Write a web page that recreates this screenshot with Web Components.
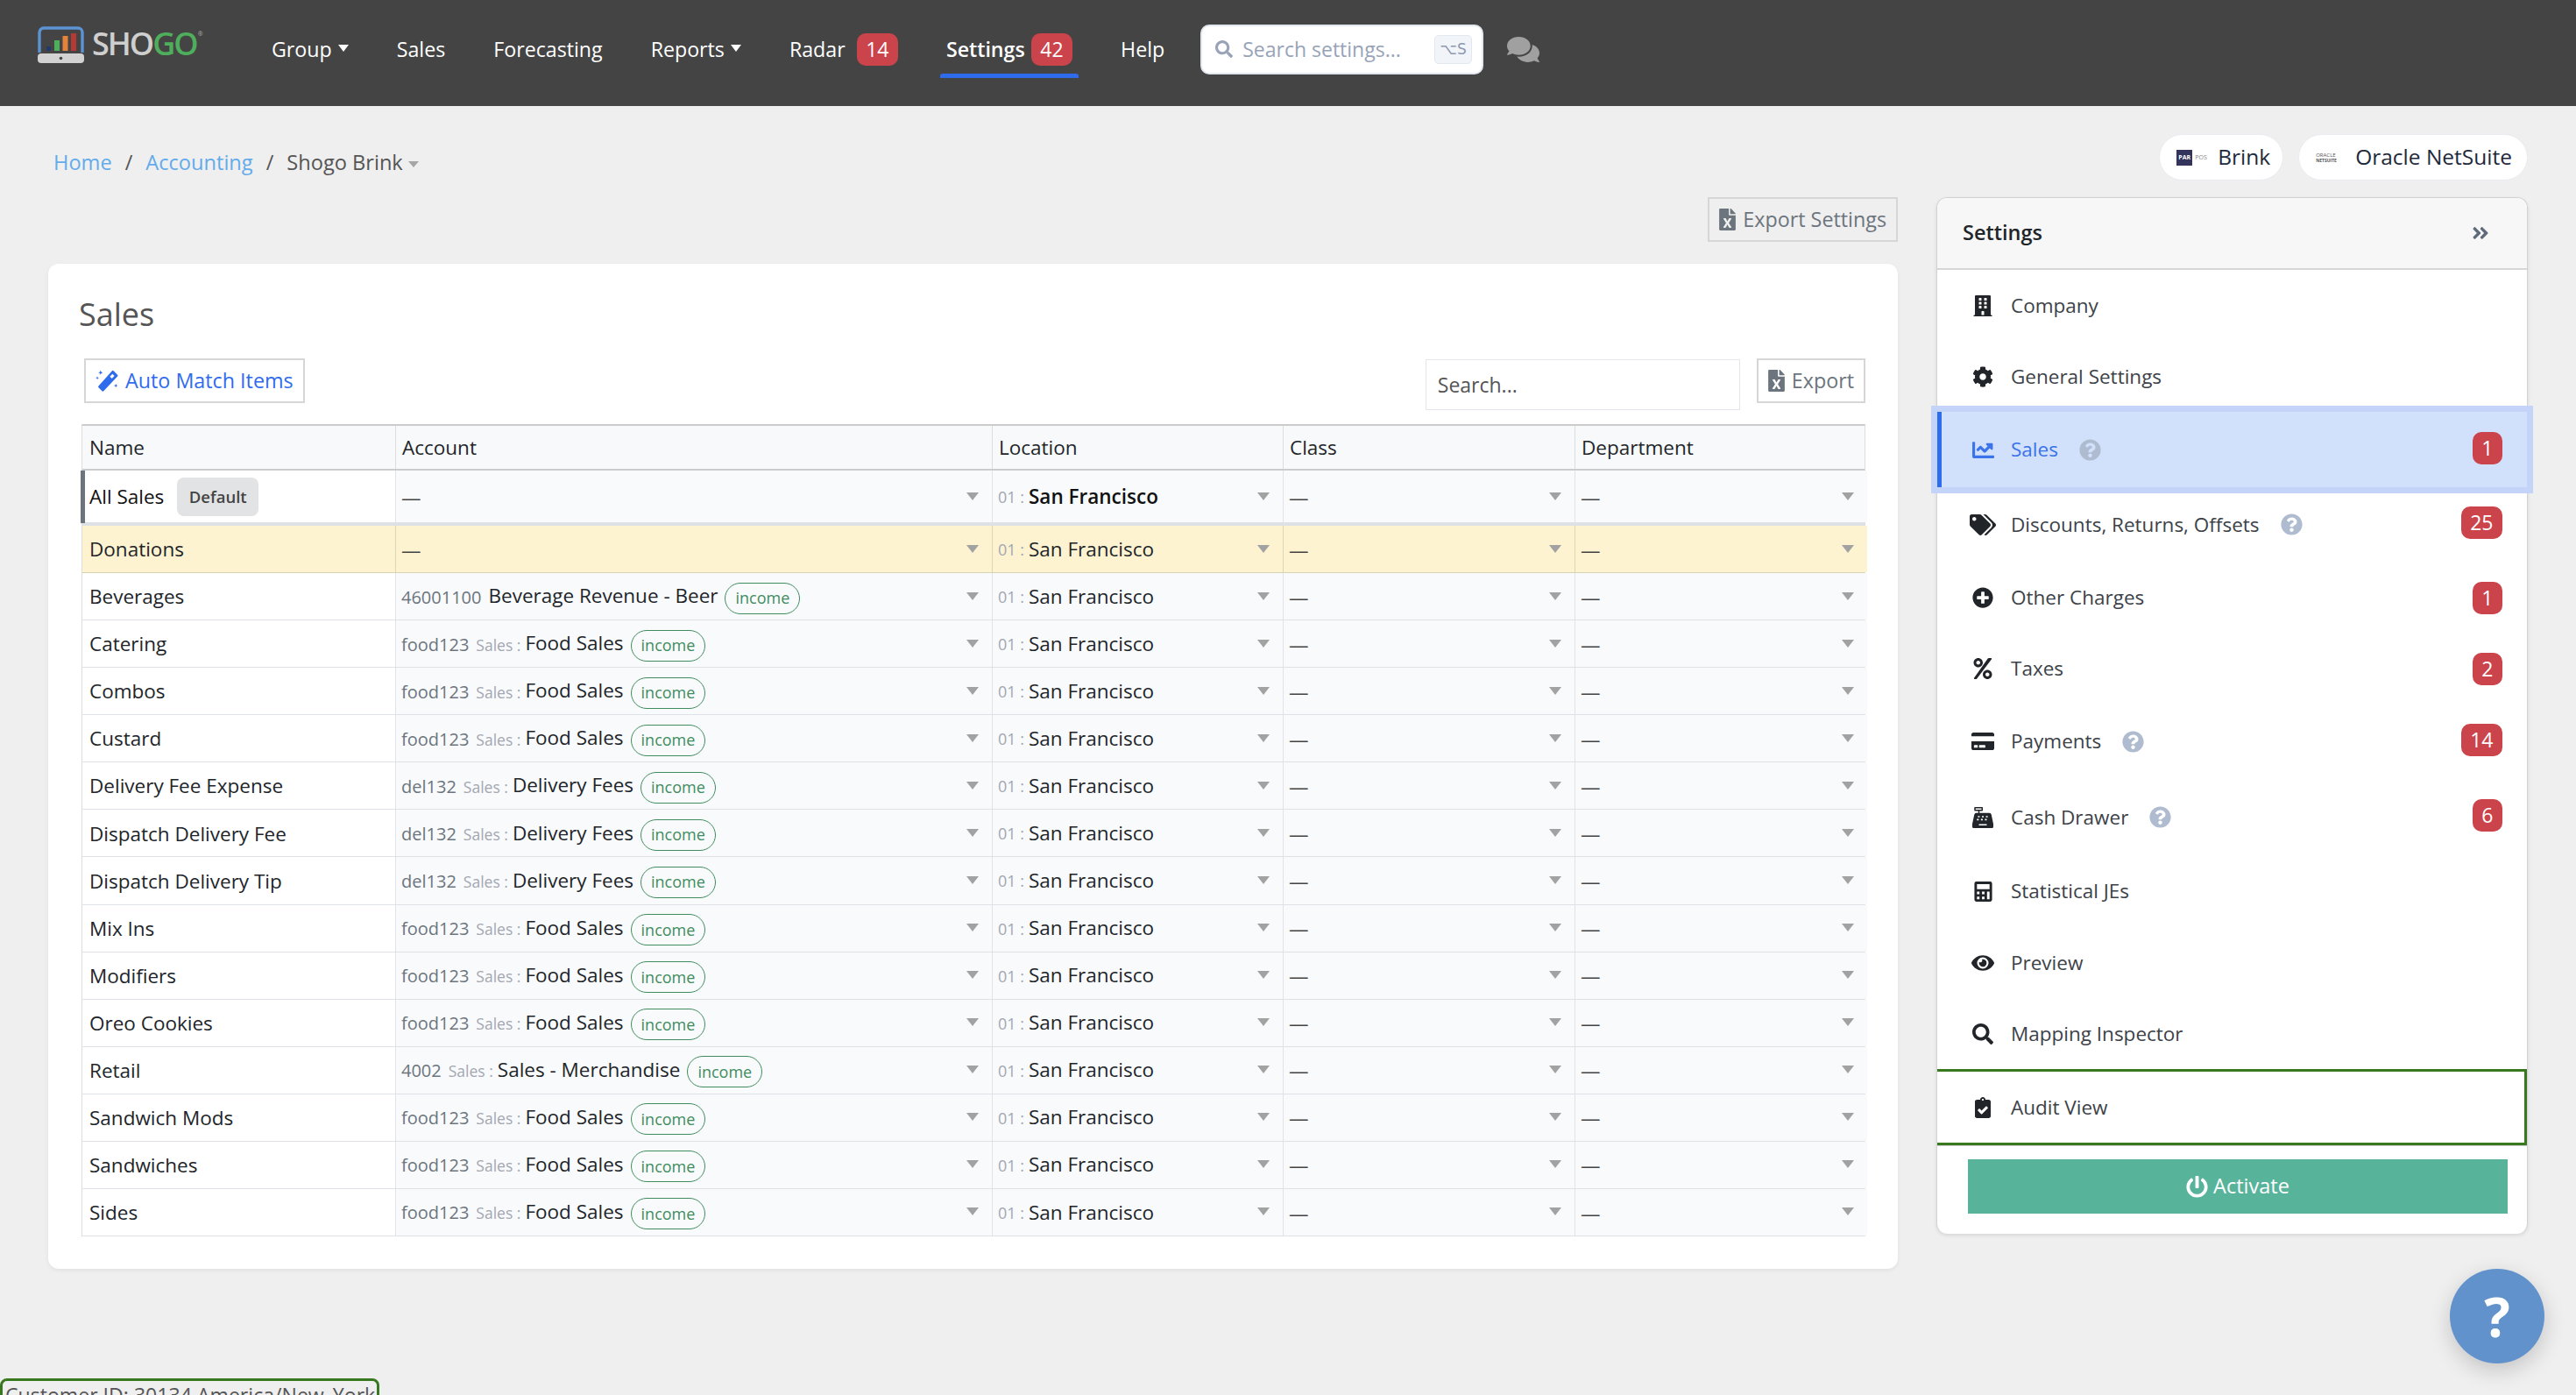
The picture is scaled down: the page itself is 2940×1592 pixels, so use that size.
<!doctype html>
<html lang="en">
<head>
<meta charset="utf-8">
<title>Shogo - Sales settings</title>
<style>
  html, body { margin: 0; height: 1592px; overflow: hidden; }
  body { background: #efefef; font: 24px/1.5 "Open Sans", "Liberation Sans", sans-serif; color: #212529; }
</style>
</head>
<body>
<shogo-header></shogo-header>
<page-body>
  <bread-crumbs slot="crumbs"></bread-crumbs>
  <system-chip slot="chips" kind="brink">Brink</system-chip>
  <system-chip slot="chips" kind="oracle">Oracle NetSuite</system-chip>
  <sales-card slot="main"></sales-card>
  <side-panel slot="side"></side-panel>
</page-body>
<customer-tag>Customer ID: 30134 America/New_York</customer-tag>
<help-fab></help-fab>

<script>
const ICONS = {
  building: ['0 0 448 512', 'M436 480h-20V24c0-13.255-10.745-24-24-24H56C42.745 0 32 10.745 32 24v456H12c-6.627 0-12 5.373-12 12v20h448v-20c0-6.627-5.373-12-12-12zM128 76c0-6.627 5.373-12 12-12h40c6.627 0 12 5.373 12 12v40c0 6.627-5.373 12-12 12h-40c-6.627 0-12-5.373-12-12V76zm0 96c0-6.627 5.373-12 12-12h40c6.627 0 12 5.373 12 12v40c0 6.627-5.373 12-12 12h-40c-6.627 0-12-5.373-12-12v-40zm52 148h-40c-6.627 0-12-5.373-12-12v-40c0-6.627 5.373-12 12-12h40c6.627 0 12 5.373 12 12v40c0 6.627-5.373 12-12 12zm76 160h-64v-84c0-6.627 5.373-12 12-12h40c6.627 0 12 5.373 12 12v84zm64-172c0 6.627-5.373 12-12 12h-40c-6.627 0-12-5.373-12-12v-40c0-6.627 5.373-12 12-12h40c6.627 0 12 5.373 12 12v40zm0-96c0 6.627-5.373 12-12 12h-40c-6.627 0-12-5.373-12-12v-40c0-6.627 5.373-12 12-12h40c6.627 0 12 5.373 12 12v40zm0-96c0 6.627-5.373 12-12 12h-40c-6.627 0-12-5.373-12-12V76c0-6.627 5.373-12 12-12h40c6.627 0 12 5.373 12 12v40z'],
  cog: ['0 0 512 512', 'M487.4 315.7l-42.6-24.6c4.3-23.2 4.3-47 0-70.2l42.6-24.6c4.9-2.8 7.1-8.6 5.5-14-11.1-35.6-30-67.8-54.7-94.6-3.8-4.1-10-5.1-14.8-2.3L380.8 110c-17.9-15.4-38.5-27.3-60.8-35.1V25.8c0-5.6-3.9-10.5-9.4-11.7-36.7-8.2-74.3-7.8-109.2 0-5.5 1.2-9.4 6.1-9.4 11.7V75c-22.2 7.9-42.8 19.8-60.8 35.1L88.7 85.5c-4.9-2.8-11-1.9-14.8 2.3-24.7 26.7-43.6 58.9-54.7 94.6-1.7 5.4.6 11.2 5.5 14L67.3 221c-4.3 23.2-4.3 47 0 70.2l-42.6 24.6c-4.9 2.8-7.1 8.6-5.5 14 11.1 35.6 30 67.8 54.7 94.6 3.8 4.1 10 5.1 14.8 2.3l42.6-24.6c17.9 15.4 38.5 27.3 60.8 35.1v49.2c0 5.6 3.9 10.5 9.4 11.7 36.7 8.2 74.3 7.8 109.2 0 5.5-1.2 9.4-6.1 9.4-11.7v-49.2c22.2-7.9 42.8-19.8 60.8-35.1l42.6 24.6c4.9 2.8 11 1.9 14.8-2.3 24.7-26.7 43.6-58.9 54.7-94.6 1.5-5.5-.7-11.3-5.6-14.1zM256 336c-44.1 0-80-35.9-80-80s35.9-80 80-80 80 35.9 80 80-35.9 80-80 80z'],
  chart: ['0 0 512 512', 'M496 384H64V80c0-8.84-7.16-16-16-16H16C7.16 64 0 71.16 0 80v336c0 17.67 14.33 32 32 32h464c8.84 0 16-7.16 16-16v-32c0-8.84-7.16-16-16-16zM464 96H345.94c-21.38 0-32.09 25.85-16.97 40.97l32.4 32.4L288 242.75l-73.37-73.37c-12.5-12.5-32.76-12.5-45.25 0l-68.69 68.69c-6.25 6.25-6.25 16.38 0 22.63l22.62 22.62c6.25 6.25 16.38 6.25 22.63 0L192 237.25l73.37 73.37c12.5 12.5 32.76 12.5 45.25 0l96-96 32.4 32.4c15.12 15.12 40.97 4.41 40.97-16.97V112c.01-8.84-7.15-16-15.99-16z'],
  tags: ['0 0 640 512', 'M497.941 225.941L286.059 14.059A48 48 0 0 0 252.118 0H48C21.49 0 0 21.49 0 48v204.118a48 48 0 0 0 14.059 33.941l211.882 211.882c18.744 18.745 49.136 18.746 67.882 0l204.118-204.118c18.745-18.745 18.745-49.137 0-67.882zM112 160c-26.51 0-48-21.49-48-48s21.49-48 48-48 48 21.49 48 48-21.49 48-48 48zm513.941 133.823L421.823 497.941c-18.745 18.745-49.137 18.745-67.882 0l-.36-.36L527.64 323.522c16.999-16.999 26.36-39.6 26.36-63.64s-9.362-46.641-26.36-63.64L331.397 0h48.721a48 48 0 0 1 33.941 14.059l211.882 211.882c18.745 18.745 18.745 49.137 0 67.882z'],
  plus: ['0 0 512 512', 'M256 8C119 8 8 119 8 256s111 248 248 248 248-111 248-248S393 8 256 8zm144 276c0 6.6-5.4 12-12 12h-92v92c0 6.6-5.4 12-12 12h-56c-6.6 0-12-5.4-12-12v-92h-92c-6.6 0-12-5.4-12-12v-56c0-6.6 5.4-12 12-12h92v-92c0-6.6 5.4-12 12-12h56c6.6 0 12 5.4 12 12v92h92c6.6 0 12 5.4 12 12v56z'],
  percent: ['0 0 448 512', 'M112 224c61.9 0 112-50.1 112-112S173.9 0 112 0 0 50.1 0 112s50.1 112 112 112zm0-160c26.5 0 48 21.5 48 48s-21.5 48-48 48-48-21.5-48-48 21.5-48 48-48zm224 224c-61.9 0-112 50.1-112 112s50.1 112 112 112 112-50.1 112-112-50.1-112-112-112zm0 160c-26.5 0-48-21.5-48-48s21.5-48 48-48 48 21.5 48 48-21.5 48-48 48zM368 0h56c14 0 22 15 14 27L80 500c-5 8-13 12-22 12H24c-14 0-22-15-14-27L346 12c5-8 13-12 22-12z'],
  card: ['0 0 576 512', 'M0 432c0 26.5 21.5 48 48 48h480c26.5 0 48-21.5 48-48V256H0v176zm192-68c0-6.6 5.4-12 12-12h136c6.6 0 12 5.4 12 12v40c0 6.6-5.4 12-12 12H204c-6.6 0-12-5.4-12-12v-40zm-128 0c0-6.6 5.4-12 12-12h72c6.6 0 12 5.4 12 12v40c0 6.6-5.4 12-12 12H76c-6.6 0-12-5.4-12-12v-40zM576 80v48H0V80c0-26.5 21.5-48 48-48h480c26.5 0 48 21.5 48 48z'],
  register: ['0 0 512 512', 'M64 0h176a16 16 0 0 1 16 16v64a16 16 0 0 1-16 16h-64v48h240a48 48 0 0 1 47 38l49 230v68a32 32 0 0 1-32 32H32a32 32 0 0 1-32-32v-68l49-230a48 48 0 0 1 47-38h48V96H64a16 16 0 0 1-16-16V16A16 16 0 0 1 64 0zM80 32v32h144V32zM136 216v36h44v-36zM234 216v36h44v-36zM332 216v36h44v-36zM112 288v36h44v-36zM210 288v36h44v-36zM308 288v36h44v-36zM160 416v32h192v-32z'],
  calculator: ['0 0 448 512', 'M48 0h352a48 48 0 0 1 48 48v416a48 48 0 0 1-48 48H48a48 48 0 0 1-48-48V48A48 48 0 0 1 48 0zM64 64v128h320V64zM64 256v64h64v-64zM192 256v64h64v-64zM320 256v192h64V256zM64 384v64h64v-64zM192 384v64h64v-64z'],
  eye: ['0 0 576 512', 'M572.52 241.4C518.29 135.59 410.93 64 288 64S57.68 135.64 3.48 241.41a32.35 32.35 0 0 0 0 29.19C57.71 376.41 165.07 448 288 448s230.32-71.64 284.52-177.41a32.35 32.35 0 0 0 0-29.19zM288 400a144 144 0 1 1 144-144 143.93 143.93 0 0 1-144 144zm0-240a95.31 95.31 0 0 0-25.31 3.79 47.85 47.85 0 0 1-66.9 66.9A95.78 95.78 0 1 0 288 160z'],
  search: ['0 0 512 512', 'M505 442.7L405.3 343c-4.5-4.5-10.6-7-17-7H372c27.6-35.3 44-79.7 44-128C416 93.1 322.9 0 208 0S0 93.1 0 208s93.1 208 208 208c48.3 0 92.7-16.4 128-44v16.3c0 6.4 2.5 12.5 7 17l99.7 99.7c9.4 9.4 24.6 9.4 33.9 0l28.3-28.3c9.4-9.4 9.4-24.6.1-34zM208 336c-70.7 0-128-57.2-128-128 0-70.7 57.2-128 128-128 70.7 0 128 57.2 128 128 0 70.7-57.2 128-128 128z'],
  clipboard: ['0 0 384 512', 'M336 64h-80c0-35.3-28.7-64-64-64s-64 28.7-64 64H48C21.5 64 0 85.5 0 112v352c0 26.5 21.5 48 48 48h288c26.5 0 48-21.5 48-48V112c0-26.5-21.5-48-48-48zM192 40c13.3 0 24 10.7 24 24s-10.7 24-24 24-24-10.7-24-24 10.7-24 24-24zm121.2 231.8l-143 141.8c-4.7 4.7-12.3 4.6-17-.1l-82.6-83.3c-4.7-4.7-4.6-12.3.1-17L99.1 285c4.7-4.7 12.3-4.6 17 .1l46 46.4 106-105.2c4.7-4.7 12.3-4.6 17 .1l28.2 28.4c4.7 4.8 4.6 12.3-.1 17z'],
  question: ['0 0 512 512', 'M504 256c0 136.997-111.043 248-248 248S8 392.997 8 256C8 119.083 119.043 8 256 8s248 111.083 248 248zM262.655 90c-54.497 0-89.255 22.957-116.549 63.758-3.536 5.286-2.353 12.415 2.715 16.258l34.699 26.31c5.205 3.947 12.621 3.008 16.665-2.122 17.864-22.658 30.113-35.797 57.303-35.797 20.429 0 45.698 13.148 45.698 32.958 0 14.976-12.363 22.667-32.534 33.976C247.128 238.528 216 254.941 216 296v4c0 6.627 5.373 12 12 12h56c6.627 0 12-5.373 12-12v-1.333c0-28.462 83.186-29.647 83.186-106.667 0-58.002-60.165-102-116.531-102zM256 338c-25.365 0-46 20.635-46 46 0 25.364 20.635 46 46 46s46-20.636 46-46c0-25.365-20.635-46-46-46z'],
  excel: ['0 0 384 512', 'M224 136V0H24C10.7 0 0 10.7 0 24v464c0 13.3 10.7 24 24 24h336c13.3 0 24-10.7 24-24V160H248c-13.2 0-24-10.8-24-24zm60.1 106.5L224 336l60.1 93.5c5.1 8-.6 18.5-10.1 18.5h-34.9c-4.4 0-8.5-2.4-10.6-6.3C208.9 405.5 192 373 192 373c-6.1 14.1-9.5 19-36.6 68.8-2.1 3.9-6.1 6.3-10.5 6.3H110c-9.5 0-15.2-10.5-10.1-18.5l60.3-93.5-60.3-93.5c-5.2-8 .6-18.5 10.1-18.5h34.8c4.4 0 8.5 2.4 10.6 6.3 26.1 48.8 20 33.6 36.6 68.5 0 0 6.1-11.7 36.6-68.5 2.1-3.9 6.2-6.3 10.6-6.3H274c9.5-.1 15.2 10.4 10.1 18.4zM384 121.9v6.1H256V0h6.1c6.4 0 12.5 2.5 17 7l97.9 98c4.5 4.5 7 10.6 7 16.9z'],
  comments: ['0 0 576 512', 'M416 192c0-88.4-93.1-160-208-160S0 103.6 0 192c0 34.3 14.1 65.9 38 92-13.4 30.2-35.5 54.2-35.8 54.5-2.2 2.3-2.8 5.7-1.5 8.7S4.8 352 8 352c36.6 0 66.9-12.3 88.7-25 32.2 15.7 70.3 25 111.3 25 114.9 0 208-71.6 208-160zm122 220c23.9-26 38-57.7 38-92 0-66.9-53.5-124.2-129.3-148.1.9 6.6 1.3 13.3 1.3 20.1 0 105.9-107.7 192-240 192-10.8 0-21.3-.8-31.7-1.9C207.8 439.6 281.8 480 368 480c41 0 79.1-9.2 111.3-25 21.8 12.7 52.1 25 88.7 25 3.2 0 6.1-1.9 7.3-4.8 1.3-2.9.7-6.3-1.5-8.7-.3-.3-22.4-24.2-35.8-54.5z'],
  chevrons: ['0 0 448 512', 'M224.3 273l-136 136c-9.4 9.4-24.6 9.4-33.9 0l-22.6-22.6c-9.4-9.4-9.4-24.6 0-33.9l96.4-96.4-96.4-96.4c-9.4-9.4-9.4-24.6 0-33.9L54.3 103c9.4-9.4 24.6-9.4 33.9 0l136 136c9.5 9.4 9.5 24.6.1 34zm192-34l-136-136c-9.4-9.4-24.6-9.4-33.9 0l-22.6 22.6c-9.4 9.4-9.4 24.6 0 33.9l96.4 96.4-96.4 96.4c-9.4 9.4-9.4 24.6 0 33.9l22.6 22.6c9.4 9.4 24.6 9.4 33.9 0l136-136c9.4-9.2 9.4-24.4 0-33.8z'],
  wand: ['0 0 512 512', 'M392 44l84 84a24 24 0 0 1 0 34L176 478a24 24 0 0 1-34 0l-76-76a24 24 0 0 1 0-34L358 44a24 24 0 0 1 34 0zM366 110l-54 56 42 42 56-54zM110 30l14 36 36 14-36 14-14 36-14-36-36-14 36-14zM40 160l10 26 26 10-26 10-10 26-10-26-26-10 26-10zM440 320l12 30 30 12-30 12-12 30-12-30-30-12 30-12z'],
  power: ['0 0 512 512', 'M400 54c66 47 104 117 104 202 0 137-111 248-248 248S8 393 8 256c0-85 38-155 104-202 11-8 27-4 34 8l16 28c6 10 3 24-7 31-43 32-69 81-69 135 0 94 76 170 170 170s170-76 170-170c0-54-26-103-69-135-10-7-13-21-7-31l16-28c7-12 23-16 34-8zM296 264c0 13-11 24-24 24h-32c-13 0-24-11-24-24V24c0-13 11-24 24-24h32c13 0 24 11 24 24z']
};

// small helper so every element gets an open shadow root with its own styles
class Base extends HTMLElement {
  constructor() {
    super();
    this.attachShadow({mode: 'open'});
    this.shadowRoot.innerHTML = this.template;
  }
}

customElements.define('ui-icon', class extends HTMLElement {
  constructor() {
    super();
    this.attachShadow({mode: 'open'});
  }
  connectedCallback() {
    const [box, d] = ICONS[this.getAttribute('name')];
    const w = this.getAttribute('w') || 24;
    const h = this.getAttribute('h') || w;
    this.shadowRoot.innerHTML = `<style>:host{display:inline-flex;flex:none;line-height:0}svg{display:block;fill:currentColor}</style>
      <svg width="${w}" height="${h}" viewBox="${box}"><path fill-rule="evenodd" d="${d}"/></svg>`;
  }
});

customElements.define('count-badge', class extends Base {
  get template() {
    return `<style>
      :host { display: inline-flex; align-items: center; justify-content: center; box-sizing: border-box; min-width: 34px; height: 37px; padding: 0 10.500px; border-radius: 10px; background: #cb444b; color: #fff; font-size: 23px; line-height: 1; }
    </style><slot></slot>`;
  }
});

customElements.define('nav-item', class extends Base {
  get template() {
    return `<style>
      :host { display: inline-flex; align-items: center; gap: 7px; position: relative; height: 37px; color: #fff; white-space: nowrap; font-size: 23.200px; }
      :host([active]) { font-weight: 600; }
      :host([active])::after { content: ""; position: absolute; left: -7px; right: -7px; top: 46px; height: 5px; background: #2f6bed; border-radius: 3px 3px 0 0; }
      .caret { display: none; width: 0; height: 0; border: 6.500px solid transparent; border-top: 8px solid #fff; border-bottom: 0; margin-top: -3px; }
      :host([caret]) .caret { display: block; }
      ::slotted(count-badge) { margin-left: 6px; font-weight: 400; }
      :host([active]) ::slotted(count-badge) { margin-left: 0; }
    </style><slot></slot><span class="caret"></span>`;
  }
});

customElements.define('shogo-logo', class extends Base {
  get template() {
    return `<style>
      :host { display: inline-flex; align-items: flex-start; gap: 9px; }
      .word { font-size: 36px; line-height: 1; font-weight: 600; letter-spacing: -2px; color: #cfcfcf; margin-top: 2px; }
      .word b { font-weight: 600; color: #4fae5c; }
      .reg { font-size: 7px; line-height: 1; color: #aaa; margin: 5px 0 0 -8px; }
      svg { display: block; }
    </style>
    <svg width="53" height="42" viewBox="0 0 53 42">
      <path d="M2 30V7a5 5 0 0 1 5-5h39a5 5 0 0 1 5 5v23" fill="none" stroke="#5b93d3" stroke-width="3.4"/>
      <rect x="10" y="23" width="5" height="5" fill="#24386b"/>
      <rect x="19" y="16" width="6" height="12" fill="#4fae5c"/>
      <rect x="28.500" y="11" width="6" height="17" fill="#e4843c"/>
      <rect x="38" y="8" width="6" height="20" fill="#b53a36"/>
      <rect x="0" y="31" width="53" height="11" rx="4" fill="#d2d2d2"/>
      <circle cx="26.500" cy="36.500" r="1.800" fill="#444"/>
    </svg>
    <span class="word">SHO<b>GO</b></span><span class="reg">®</span>`;
  }
});

customElements.define('shogo-header', class extends Base {
  get template() {
    return `<style>
      :host { display: block; height: 121px; background: #444; box-sizing: border-box; padding: 0 0 0 43px; }
      .row { display: flex; height: 100%; align-items: center; padding-bottom: 9px; box-sizing: border-box; }
      shogo-logo { width: 267px; align-self: flex-start; margin-top: 30px; }
      nav { display: flex; align-items: center; gap: 55px; }
      .find { display: flex; align-items: center; box-sizing: border-box; width: 323px; height: 57px; margin-left: 41px; padding: 0 11px 0 15px; background: #fff; border: 2px solid #e3e8ef; border-radius: 10px; color: #98a3b8; font-size: 23px; }
      .find span { flex: 1; margin-left: 11px; }
      .find kbd { display: flex; align-items: center; justify-content: center; box-sizing: border-box; width: 43px; height: 33px; border: 1px solid #e2e8f0; border-radius: 5px; background: #f1f4f9; color: #8e9ab0; font: 17px "DejaVu Sans", sans-serif; }
      .chat { margin-left: 27px; color: #a0a0a0; }
    </style>
    <div class="row">
      <shogo-logo></shogo-logo>
      <nav>
        <nav-item caret>Group</nav-item>
        <nav-item>Sales</nav-item>
        <nav-item>Forecasting</nav-item>
        <nav-item caret>Reports</nav-item>
        <nav-item>Radar<count-badge>14</count-badge></nav-item>
        <nav-item active>Settings<count-badge>42</count-badge></nav-item>
        <nav-item>Help</nav-item>
      </nav>
      <div class="find">
        <ui-icon name="search" w="20"></ui-icon>
        <span>Search settings...</span>
        <kbd>⌥S</kbd>
      </div>
      <ui-icon class="chat" name="comments" w="37"></ui-icon>
    </div>`;
  }
});

customElements.define('page-body', class extends Base {
  get template() {
    return `<style>
      :host { display: block; padding: 0 55px; }
      .top { display: flex; justify-content: space-between; align-items: flex-start; height: 104px; box-sizing: border-box; padding: 32px 0 0 6px; }
      .chips { display: flex; gap: 17px; }
      .cols { display: flex; gap: 44px; align-items: flex-start; }
      .main { flex: 1; min-width: 0; }
      .side { flex: none; width: 675px; }
    </style>
    <div class="top"><div><slot name="crumbs"></slot></div><div class="chips"><slot name="chips"></slot></div></div>
    <div class="cols"><div class="main"><slot name="main"></slot></div><div class="side"><slot name="side"></slot></div></div>`;
  }
});

customElements.define('bread-crumbs', class extends Base {
  get template() {
    return `<style>
      :host { display: flex; align-items: center; height: 65px; font-size: 23.600px; color: #555; }
      a { color: #64abea; }
      i { font-style: normal; margin: 0 15px; }
      .caret { width: 0; height: 0; border: 6px solid transparent; border-top: 7px solid #a6a6a6; border-bottom: 0; margin: 3px 0 0 6px; }
    </style>
    <a>Home</a><i>/</i><a>Accounting</a><i>/</i><span>Shogo Brink</span><span class="caret"></span>`;
  }
});

customElements.define('system-chip', class extends Base {
  get template() {
    return `<style>
      :host { display: inline-flex; align-items: center; box-sizing: border-box; height: 53px; padding: 0 17px 0 19px; background: #fff; border: 1px solid #e8ebf1; border-radius: 27px; color: #1e293b; font-size: 24.500px; white-space: nowrap; }
      :host([kind="brink"]) { padding-right: 14px; }
      .logo { display: flex; align-items: center; margin-right: 15px; line-height: 1; }
      .par { display: flex; align-items: center; justify-content: center; width: 18px; height: 18px; background: #33335c; color: #fff; font-size: 7px; font-weight: 700; }
      .pos { font-size: 7px; color: #888; margin-left: 3px; width: 11px; }
      .ora { display: flex; flex-direction: column; gap: 1px; font-size: 6px; color: #555; width: 30px; }
      .ora b { font-size: 5px; }
    </style><span class="logo"></span><slot></slot>`;
  }
  connectedCallback() {
    const logo = this.shadowRoot.querySelector('.logo');
    logo.innerHTML = this.getAttribute('kind') === 'brink'
      ? '<span class="par">PAR</span><span class="pos">POS</span>'
      : '<span class="ora"><span>ORACLE</span><b>NETSUITE</b></span>';
  }
});

customElements.define('plain-button', class extends Base {
  get template() {
    return `<style>
      :host { display: inline-flex; align-items: center; gap: 8px; box-sizing: border-box; height: 51px; padding: 0 11px; border: 2px solid #d6d6d6; background: #fff; color: #6c757d; font-size: 23.300px; white-space: nowrap; }
      :host([flat]) { background: transparent; }
      :host([blue]) { color: #2f6bed; gap: 7px; }
    </style><slot></slot>`;
  }
});

customElements.define('sales-card', class extends Base {
  get template() {
    return `<style>
      :host { display: block; }
      .head { display: flex; justify-content: flex-end; height: 76px; }
      .card { box-sizing: border-box; height: 1147px; padding: 32px 37px 0 38px; background: #fff; border-radius: 12px; box-shadow: 0 2px 5px rgba(0,0,0,.06); }
      h2 { margin: 0 0 0 -3px; font-size: 36px; font-weight: 400; line-height: 52px; color: #555; }
      .tools { display: flex; align-items: flex-start; margin-top: 24px; height: 75px; padding-left: 3px; }
      .search { box-sizing: border-box; width: 359px; height: 58px; margin: 1px 19px 0 auto; padding: 0 13px; display: flex; align-items: center; border: 1px solid #e4e6ec; color: #555; font-size: 23px; }
    </style>
    <div class="head"><plain-button flat><ui-icon name="excel" w="19" h="25"></ui-icon>Export Settings</plain-button></div>
    <div class="card">
      <h2>Sales</h2>
      <div class="tools">
        <plain-button blue><ui-icon name="wand" w="27"></ui-icon>Auto Match Items</plain-button>
        <div class="search">Search...</div>
        <plain-button><ui-icon name="excel" w="19" h="25"></ui-icon>Export</plain-button>
      </div>
      <map-table></map-table>
    </div>`;
  }
});

const COLS = '357px 681px 332px 333px 334px';

customElements.define('map-table', class extends Base {
  get template() {
    const food = ['food123', 'Sales', 'Food Sales'];
    const del = ['del132', 'Sales', 'Delivery Fees'];
    const rows = [
      ['Beverages', ['46001100', '', 'Beverage Revenue - Beer']],
      ['Catering', food], ['Combos', food], ['Custard', food],
      ['Delivery Fee Expense', del], ['Dispatch Delivery Fee', del], ['Dispatch Delivery Tip', del],
      ['Mix Ins', food], ['Modifiers', food], ['Oreo Cookies', food],
      ['Retail', ['4002', 'Sales', 'Sales - Merchandise']],
      ['Sandwich Mods', food], ['Sandwiches', food], ['Sides', food]
    ];
    const row = (name, acc, extra = '') => {
      const a = acc ? `code="${acc[0]}" sub="${acc[1]}" account="${acc[2]}"` : '';
      return `<map-row name="${name}" ${a} ${extra}></map-row>`;
    };
    return `<style>
      :host { display: block; font-size: 22.500px; }
      .hd { display: grid; grid-template-columns: ${COLS}; height: 53px; box-sizing: border-box; border-top: 2px solid #ccc; border-bottom: 2px solid #ccc; background: #f8f9fa; border-left: 1px solid #ddd; border-right: 1px solid #ddd; }
      .hd div { display: flex; align-items: center; padding-left: 7px; border-left: 1px solid #ddd; }
      .hd div:first-child { border-left: 0; padding-left: 8px; }
    </style>
    <div class="hd"><div>Name</div><div>Account</div><div>Location</div><div>Class</div><div>Department</div></div>
    ${row('All Sales', null, 'kind="all"')}
    ${row('Donations', null, 'kind="warn"')}
    ${rows.map(r => row(r[0], r[1])).join('')}`;
  }
});

customElements.define('map-row', class extends HTMLElement {
  constructor() {
    super();
    this.attachShadow({mode: 'open'});
  }
  connectedCallback() {
    const code = this.getAttribute('code');
    const sub = this.getAttribute('sub');
    const acc = code
      ? `<span class="code">${code}</span>${sub ? `<span class="sub">${sub} :</span>` : ''}<span class="nm">${this.getAttribute('account')}</span><span class="pill">income</span>`
      : '<span class="dash">—</span>';
    const dflt = this.getAttribute('kind') === 'all' ? '<span class="dflt">Default</span>' : '';
    this.shadowRoot.innerHTML = `<style>
      :host { display: grid; grid-template-columns: ${COLS}; height: 54.070px; box-sizing: border-box; border-bottom: 1px solid #dee2e6; border-left: 1px solid #ddd; border-right: 1px solid #ddd; white-space: nowrap; }
      :host([kind="all"]) { height: 63px; border-bottom: 4px solid #dee2e6; position: relative; }
      :host([kind="all"])::before { content: ""; position: absolute; left: -2px; top: 0; bottom: -1px; width: 5px; background: #6c757d; }
      :host([kind="warn"]) { border-bottom-color: #d8d2b4; }
      .c { display: flex; align-items: center; gap: 8px; padding: 2px 15px 0 6px; border-left: 1px solid #e1e3e8; background: #f9fafc; min-width: 0; }
      .name { background: #fff; border-left: 0; padding: 1px 8px 0; color: #212529; }
      :host([kind="warn"]) .c { background: #fdf3d1; border-left-color: #dcd6b8; }
      :host([kind="all"]) .name { font-weight: 500; color: #111; gap: 15px; padding-top: 0; }
      .code { font-size: 20px; color: #6c757d; }
      .sub { font-size: 17.500px; color: #a3a7b1; margin-right: -3px; }
      .nm { color: #212529; margin-top: -3px; }
      .dash { color: #444; }
      .pill { display: flex; align-items: center; box-sizing: border-box; height: 36px; padding: 0 11px; margin-top: 2px; border: 1px solid #3f8d5e; border-radius: 18px; color: #3f8d5e; font-size: 18px; }
      .dflt { display: flex; align-items: center; height: 44px; padding: 0 13.500px; border-radius: 8px; background: #e2e3e5; color: #444; font-size: 18.500px; font-weight: 600; margin-top: 1px; }
      .loc { gap: 0; }
      .loc small { font-size: 18px; color: #a3a7b1; width: 35px; flex: none; }
      :host([kind="all"]) .loc b { font-weight: 600; color: #111; }
      b { font-weight: 400; margin-top: -2px; }
      .caret { width: 0; height: 0; margin: -3px 0 0 auto; flex: none; border: 7px solid transparent; border-top: 9px solid #a2a2a2; border-bottom: 0; }
    </style>
    <div class="c name">${this.getAttribute('name')}${dflt}</div>
    <div class="c">${acc}<span class="caret"></span></div>
    <div class="c loc"><small>01 :</small><b>San Francisco</b><span class="caret"></span></div>
    <div class="c"><span class="dash">—</span><span class="caret"></span></div>
    <div class="c"><span class="dash">—</span><span class="caret"></span></div>`;
  }
});

customElements.define('side-item', class extends Base {
  get template() {
    return `<style>
      :host { display: flex; align-items: center; box-sizing: border-box; height: var(--h, 81px); padding: 0 28px 0 36px; color: #3c4248; font-size: 22.500px; }
      .ic { display: flex; justify-content: center; width: 32px; margin-right: 16px; color: #212529; }
      :host([active]) { color: #3a73ea; background: #d1e0fb; box-shadow: inset 5px 0 0 #2f6bed, 0 0 0 7px #c4d4f8; position: relative; }
      :host([active]) .ic { color: #3a73ea; }
      :host([audit]) { border-top: 3px solid #38791f; border-right: 3px solid #38791f; border-bottom: 3px solid #38791f; padding-right: 25px; box-shadow: 0 1px 0 #ccc; }
      .help { display: none; margin: 0 0 0 24px; color: #afbcd0; }
      :host([help]) .help { display: inline-flex; }
      .end { margin: 0 0 0 auto; line-height: 0; }
      :host([help]) .end { margin-top: -4px; }
    </style>
    <span class="ic"><slot name="icon"></slot></span>
    <span><slot></slot></span>
    <ui-icon class="help" name="question" w="25"></ui-icon>
    <span class="end"><slot name="end"></slot></span>`;
  }
});

customElements.define('side-panel', class extends Base {
  get template() {
    const items = [
      ['building', 'Company', 82, 24],
      ['cog', 'General Settings', 80, 24],
      ['chart', 'Sales', 86, 25, '1', 'help active'],
      ['tags', 'Discounts, Returns, Offsets', 85, 30, '25', 'help'],
      ['plus', 'Other Charges', 82, 24, '1'],
      ['percent', 'Taxes', 80, 24, '2'],
      ['card', 'Payments', 86, 26, '14', 'help'],
      ['register', 'Cash Drawer', 87, 24, '6', 'help'],
      ['calculator', 'Statistical JEs', 82, 23],
      ['eye', 'Preview', 81, 26],
      ['search', 'Mapping Inspector', 81, 24],
      ['clipboard', 'Audit View', 87, 24, '', 'audit']
    ];
    return `<style>
      :host { display: block; box-sizing: border-box; height: 1183px; background: #fff; border: 1px solid #d2d2d2; border-bottom-width: 0; border-radius: 12px; box-shadow: 0 2px 4px rgba(0,0,0,.1); }
      header { display: flex; align-items: center; justify-content: space-between; box-sizing: border-box; height: 82px; padding: 0 42px 0 29px; background: #f7f7f7; border-bottom: 2px solid #d6d6d6; border-radius: 12px 12px 0 0; font-weight: 600; font-size: 23.500px; color: #212529; }
      header ui-icon { color: #5f6b7a; }
      .go { display: flex; align-items: center; justify-content: center; gap: 6px; box-sizing: border-box; height: 62px; margin: 16px 22px 0 35px; background: #58b39b; color: #fff; font-size: 23.500px; }
    </style>
    <header>Settings<ui-icon name="chevrons" w="22"></ui-icon></header>
    ${items.map(([icon, text, h, w, count, flags]) => `<side-item style="--h:${h}px" ${flags || ''}>
      <ui-icon slot="icon" name="${icon}" w="${w}"></ui-icon>${text}${count ? `<count-badge slot="end">${count}</count-badge>` : ''}
    </side-item>`).join('')}
    <div class="go"><ui-icon name="power" w="25"></ui-icon>Activate</div>`;
  }
});

customElements.define('customer-tag', class extends Base {
  get template() {
    return `<style>
      :host { display: block; box-sizing: border-box; width: 433px; height: 60px; margin-top: 125px; padding: 0 3px; border: 3px solid #38791f; border-radius: 8px; color: #555; font-size: 23.100px; line-height: 32px; white-space: nowrap; overflow: hidden; }
    </style><slot></slot>`;
  }
});

customElements.define('help-fab', class extends Base {
  get template() {
    return `<style>
      :host { position: fixed; left: 2796px; top: 1448px; display: flex; align-items: center; justify-content: center; width: 108px; height: 108px; border-radius: 50%; background: #6292cb; box-shadow: 0 8px 24px rgba(0,0,0,.18); color: #fff; font-size: 62px; font-weight: 700; line-height: 1; }
    </style><slot>?</slot>`;
  }
});
</script>
</body>
</html>
